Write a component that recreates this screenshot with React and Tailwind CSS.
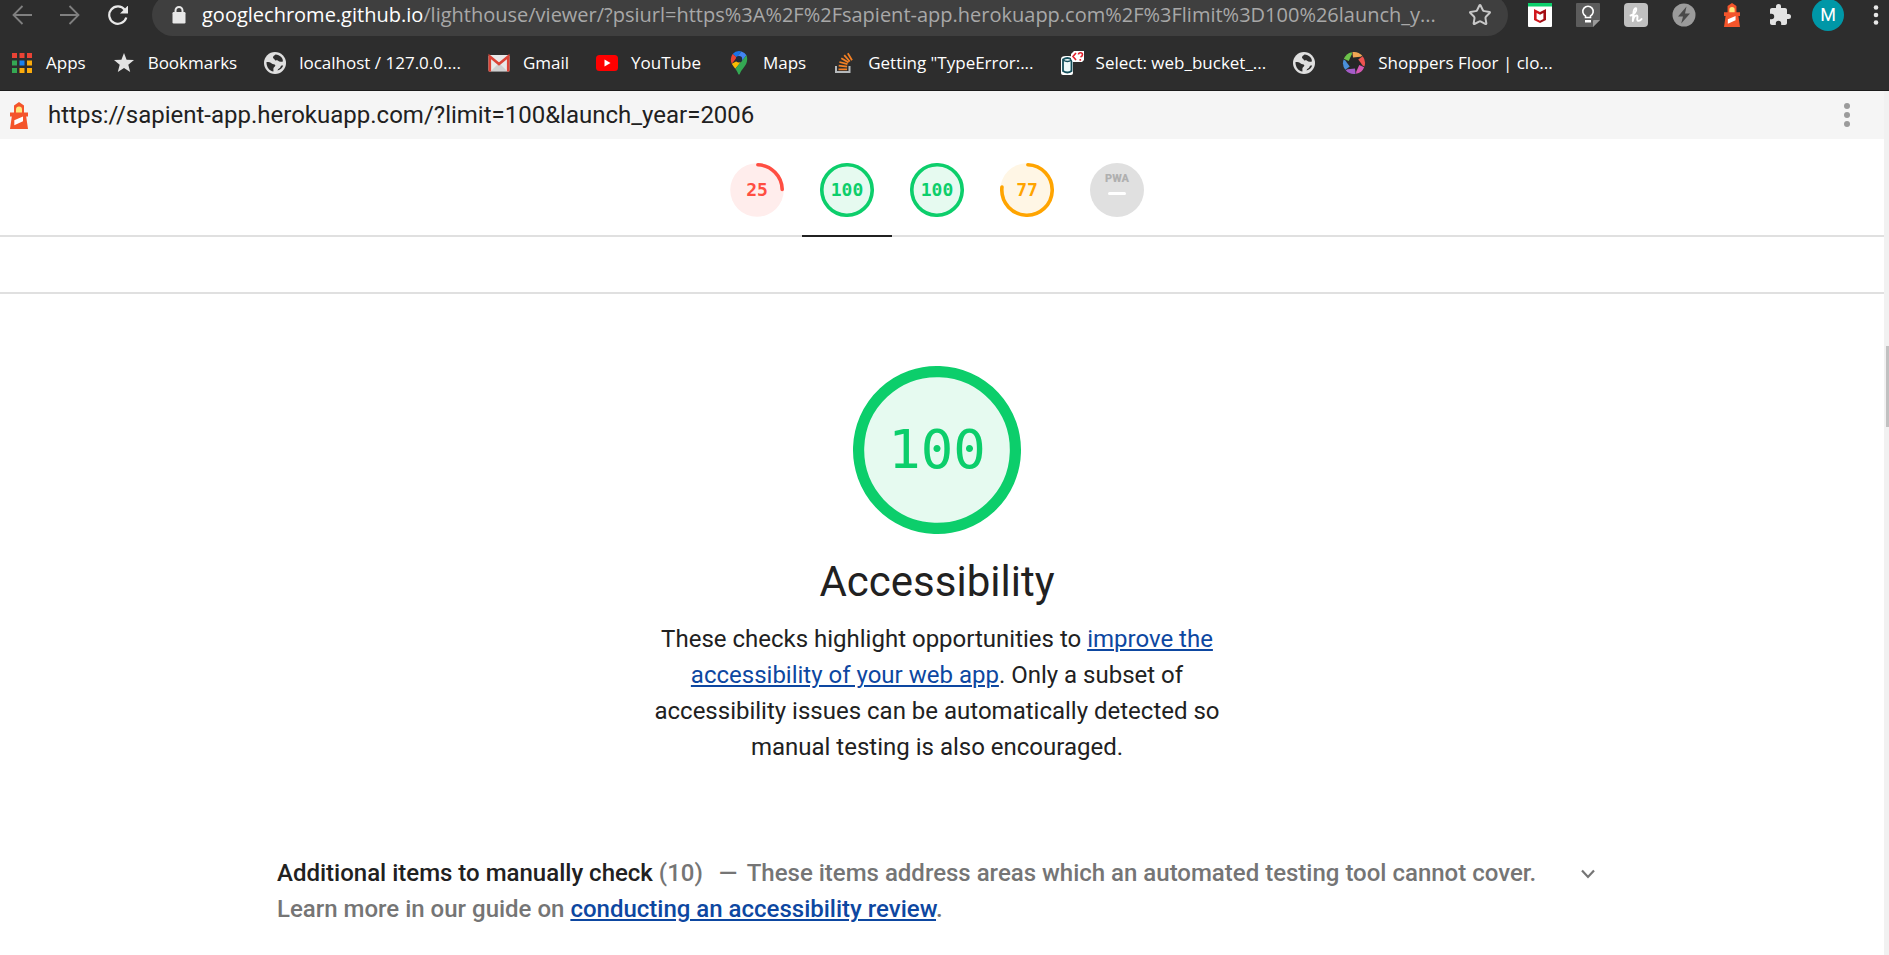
import React from "react";
import { Star } from "lucide-react";

function LighthouseIcon({ className }) {
  return (
    <svg viewBox="0 0 18 27" className={className} aria-hidden="true">
      <path d="M9 0 14 3.500V10.500H18V14.500H16.200L18 27H0L1.800 14.500H0V10.500H4V3.500Z" fill="#f4552b" />
      <path d="M6 10.500V7.500a3 3 0 0 1 6 0v3Z" fill="#ffe97d" />
      <path d="m4.300 18.200 8.700-3.700v4.800l-8.700 4Z" fill="#fff" />
    </svg>
  );
}

function GlobeIcon() {
  return (
    <svg viewBox="0 0 24 24" className="size-6" aria-hidden="true">
      <circle cx="12" cy="12" r="11" fill="#dfdfdf" />
      <path
        d="M12.500 3.500c-1 1-2.500 1.300-2.500 3 0 1.200 1.300 1 1.600 2 .4 1.600 2.600.4 3.500 1.300 1 1 2.600 1.200 4.800.7C20 6.500 17 4 12.500 3.500ZM3.500 11c2.500 0 4 .3 5.200 1.600 1 .9 3 .2 3.600 1.700.5 1.400-1.800 1.600-1.900 3.200-.1 1.300.2 2.500 0 3C6.500 20 3.300 16.200 3.500 11Zm11 8.500c.3-2 2.800-2 3.200-4 .2-1.200 1.300-1.200 2.500-1-.8 2.500-3 4.500-5.700 5Z"
        fill="#2d2d2d"
      />
    </svg>
  );
}

function AppsIcon() {
  const colors = ["#ea4335", "#ea4335", "#ea4335", "#34a853", "#1a82f0", "#fbab0c", "#34a853", "#fbab0c", "#fbab0c"];
  return (
    <svg viewBox="0 0 24 24" className="size-6" aria-hidden="true">
      {colors.map((c, i) => (
        <rect key={i} x={2 + (i % 3) * 7.500} y={2 + Math.floor(i / 3) * 7.500} width="5" height="5" fill={c} />
      ))}
    </svg>
  );
}

function SolidStarIcon() {
  return (
    <svg viewBox="0 0 24 24" className="size-6" aria-hidden="true">
      <path d="m12 2 2.600 6.700 7.400.4-5.700 4.600 1.900 7.300-6.200-4-6.200 4 1.900-7.300L2 9.100l7.400-.4Z" fill="#e3e3e3" />
    </svg>
  );
}

function GmailIcon() {
  return (
    <svg viewBox="0 0 24 24" className="size-6" aria-hidden="true">
      <rect x="1.500" y="4" width="21" height="16.500" rx="1.500" fill="#e9e9e9" />
      <path d="m4 20 8-8 8 8Z" fill="#d0d0d0" />
      <path d="M2.800 20.500V5.500L12 13l9.200-7.500v15" fill="none" stroke="#db4437" strokeWidth="2.600" />
    </svg>
  );
}

function YouTubeIcon() {
  return (
    <svg viewBox="0 0 24 24" className="size-6" aria-hidden="true">
      <rect x="1" y="4" width="22" height="16" rx="3.500" fill="#f00" />
      <path d="m9.500 8.500 6 3.500-6 3.500Z" fill="#fff" />
    </svg>
  );
}

function MapsIcon() {
  return (
    <svg viewBox="0 0 24 24" className="size-6" aria-hidden="true">
      <path d="M12 0a8.200 8.200 0 0 0-6.300 2.900L9.600 6.200 14.500.4A8.200 8.200 0 0 0 12 0Z" fill="#1a73e8" />
      <path d="M5.700 2.900A8.200 8.200 0 0 0 3.800 8.200c0 1.700.4 3.200 1 4.500l5-6.300Z" fill="#ea4335" />
      <path d="m14.500.4-5 6 5 4 5-6.100A8.200 8.200 0 0 0 14.500.4Z" fill="#4285f4" />
      <path d="M9.500 10.300 4.800 12.700c.9 1.800 2.200 3.300 3.500 5l6.200-7.400Z" fill="#fbbc04" />
      <path d="m19.500 4.300-5 6-6.200 7.400c1.200 1.500 2.300 3.200 2.800 5.100.3 1.100 1.500 1.100 1.800 0 1.200-4.600 7.300-8 7.300-14.600 0-1.400-.2-2.700-.7-3.900Z" fill="#34a853" />
      <circle cx="12" cy="8.200" r="3.200" fill="#202b3a" />
    </svg>
  );
}

function StackOverflowIcon() {
  return (
    <svg viewBox="0 0 24 24" className="size-6" fill="none" aria-hidden="true">
      <path d="M4 15v6h13.500v-6" stroke="#b5b9bc" strokeWidth="2" />
      <g stroke="#f48024" strokeWidth="1.800">
        <path d="M6.500 18.300h8.500M6.700 14.700l8.400.9M7.400 11l8.100 2.200M9.300 7.200l7.200 4.400M12.200 4.200l5.600 6.300M15.800 2.200l4.200 7" />
      </g>
    </svg>
  );
}

function BucketIcon() {
  return (
    <svg viewBox="0 0 24 24" className="size-6" aria-hidden="true">
      <path d="M1 8q0-3 5-3h3q4 0 4 3v14q0 2-2 2H3q-2 0-2-2Z" fill="#fff" />
      <path d="M3 8.500q4.500-3 8.500 0V20q-4 3-8.500 0Z" fill="#eefafa" stroke="#16505c" strokeWidth="1.800" />
      <path d="M3 9q4.500 3 8.500 0" fill="none" stroke="#16505c" strokeWidth="1.500" />
      <path d="M14 0h10v9l-2 2h-9l-2-3V3Z" fill="#fff" />
      <path d="m16 2-3 3.500L16 9M18.500 3.500q0-1.800 2-1.800t2 2q0 1.500-2 2.300M20.300 8v1.800" fill="none" stroke="#e3202b" strokeWidth="1.600" />
    </svg>
  );
}

function ApertureIcon() {
  const colors = ["#f2a654", "#ef5350", "#d659b4", "#a55cc9", "#4a90d9", "#6cc24a"];
  return (
    <svg viewBox="-12 -12 24 24" className="size-6" aria-hidden="true">
      <circle r="7" fill="#262626" />
      {colors.map((c, i) => (
        <path key={c} d="M-1.500-10.900A11 11 0 0 1 8.300-7.200L6.500-6.300-1-5.500Z" fill={c} transform={`rotate(${i * 60})`} />
      ))}
    </svg>
  );
}

const bookmarks = [
  { icon: <AppsIcon />, label: "Apps" },
  { icon: <SolidStarIcon />, label: "Bookmarks" },
  { icon: <GlobeIcon />, label: "localhost / 127.0.0...." },
  { icon: <GmailIcon />, label: "Gmail" },
  { icon: <YouTubeIcon />, label: "YouTube" },
  { icon: <MapsIcon />, label: "Maps" },
  { icon: <StackOverflowIcon />, label: 'Getting "TypeError:...' },
  { icon: <BucketIcon />, label: "Select: web_bucket_..." },
  { icon: <GlobeIcon />, label: "" },
  { icon: <ApertureIcon />, label: "Shoppers Floor | clo..." },
];

const extensions = [
  {
    name: "McAfee",
    icon: (
      <svg viewBox="0 0 24 24" className="size-6">
        <path d="M0 0h24v23a1 1 0 0 1-1 1H1a1 1 0 0 1-1-1Z" fill="#fff" />
        <path d="M0 0h24v3.500H0Z" fill="#0ccf6b" />
        <path d="m6 6 6 3v2.800L8.600 10v6l3.400 1.700V20l-6-3Z" fill="#d0161c" />
        <path d="m18 6-6 3v2.800l3.400-1.800v6L12 17.700V20l6-3Z" fill="#a30d14" />
      </svg>
    ),
  },
  {
    name: "Keep",
    icon: (
      <svg viewBox="0 0 24 24" className="size-6">
        <path d="M1 0h22a1 1 0 0 1 1 1v16l-7 7H1a1 1 0 0 1-1-1V1a1 1 0 0 1 1-1Z" fill="#5c5c5c" />
        <path d="M17 24v-6a1 1 0 0 1 1-1h6Z" fill="#9a9a9a" />
        <path d="M9.500 14.500V13a5.200 5.200 0 1 1 5 0v1.500Z" fill="none" stroke="#fff" strokeWidth="1.600" />
        <path d="M9 17h6v2.500H9Z" fill="#fff" />
      </svg>
    ),
  },
  {
    name: "Honey",
    icon: (
      <svg viewBox="0 0 24 24" className="size-6">
        <rect width="24" height="24" rx="4" fill="#c0c0c0" />
        <path
          d="M6.500 12.500c3-.5 6.200-4 5.800-6.500-.4-1.700-2.300-.6-2.700 2.500L8.800 18c.6-3 2-5.600 3.800-5.500 1.500.2.700 2.400.6 3.800 0 2.300 2.600 2 4.300-.2"
          fill="none"
          stroke="#fff"
          strokeWidth="1.900"
          strokeLinecap="round"
          strokeLinejoin="round"
        />
      </svg>
    ),
  },
  {
    name: "AMP",
    icon: (
      <svg viewBox="0 0 24 24" className="size-6">
        <circle cx="12" cy="12" r="11.500" fill="#9b9b9b" />
        <path d="M14.500 3.500 6 13.500h5l-1.800 7L18 10.500h-5Z" fill="#4a4a4a" />
      </svg>
    ),
  },
  { name: "Lighthouse", icon: <LighthouseIcon className="h-6 w-4" /> },
  {
    name: "Extensions",
    icon: (
      <svg viewBox="0 0 24 24" className="size-6">
        <path
          d="M20.500 11H19V7c0-1.100-.9-2-2-2h-4V3.500a2.500 2.500 0 0 0-5 0V5H4c-1.100 0-2 .9-2 2v3.800h1.500a2.700 2.700 0 0 1 0 5.400H2V20c0 1.100.9 2 2 2h3.800v-1.500a2.700 2.700 0 0 1 5.400 0V22H17c1.100 0 2-.9 2-2v-4h1.500a2.500 2.500 0 0 0 0-5Z"
          fill="#e3e3e3"
        />
      </svg>
    ),
  },
];

function BrowserChrome() {
  return (
    <header className="overflow-hidden border-b border-[#1c1c1c] bg-[#2d2d2d] font-['Open_Sans','Noto_Sans',sans-serif]">
      <div className="-mt-1.5 flex h-[42px] items-center">
        <div className="mr-6 flex gap-7 pl-3">
          <button type="button" aria-label="Back">
            <svg viewBox="0 0 20 20" className="size-5" fill="none" stroke="#808080" strokeWidth="1.800">
              <path d="M20 10H1.500M10.500 1 1.500 10l9 9" />
            </svg>
          </button>
          <button type="button" aria-label="Forward">
            <svg viewBox="0 0 20 20" className="size-5" fill="none" stroke="#808080" strokeWidth="1.800">
              <path d="M0 10h18.500M9.500 1l9 9-9 9" />
            </svg>
          </button>
          <button type="button" aria-label="Reload">
            <svg viewBox="0 0 20 20" className="size-5">
              <path d="M16.800 4.700A8.700 8.700 0 1 0 18.300 12.500" fill="none" stroke="#e8e8e8" strokeWidth="2.200" />
              <path d="M20.500 0v8.500H12Z" fill="#e8e8e8" />
            </svg>
          </button>
        </div>
        <div className="flex h-full min-w-0 flex-1 items-center rounded-full bg-[#3f3f3f] pr-4 pl-5">
          <svg viewBox="0 0 14 18" className="h-[18px] w-3.5 shrink-0" aria-hidden="true">
            <rect x="0.500" y="6" width="13" height="11.500" rx="1.200" fill="#e8e8e8" />
            <path d="M3.500 7V4.500a3.500 3.500 0 0 1 7 0V7" fill="none" stroke="#e8e8e8" strokeWidth="2" />
          </svg>
          <p className="ml-4 min-w-0 flex-1 overflow-hidden text-xl whitespace-nowrap text-[#a8a8a8]">
            <span className="text-white">googlechrome.github.io</span>
            /lighthouse/viewer/?psiurl=https%3A%2F%2Fsapient-app.herokuapp.com%2F%3Flimit%3D100%26launch_y...
          </p>
          <button type="button" aria-label="Bookmark this page">
            <Star className="size-6 text-[#c8c8c8]" strokeWidth={2} />
          </button>
        </div>
        <div className="ml-2 flex shrink-0 items-center">
          {extensions.map((e) => (
            <button key={e.name} type="button" aria-label={e.name} className="flex w-12 justify-center">
              {e.icon}
            </button>
          ))}
          <button type="button" aria-label="Profile" className="flex w-12 justify-center">
            <span className="flex size-8 items-center justify-center rounded-full bg-[#0097a7] font-[Roboto,sans-serif] text-lg text-white">
              M
            </span>
          </button>
          <button type="button" aria-label="Browser menu" className="pr-2.5 pl-[21px]">
            <svg viewBox="0 0 6 20" className="h-5 w-1.5" fill="#e8e8e8">
              <circle cx="3" cy="2.500" r="2.300" />
              <circle cx="3" cy="10" r="2.300" />
              <circle cx="3" cy="17.500" r="2.300" />
            </svg>
          </button>
        </div>
      </div>
      <nav aria-label="Bookmarks" className="flex h-[54px] items-center gap-[26px] pl-2.5">
        {bookmarks.map((b, i) => (
          <a key={i} href="#bookmark" aria-label={b.label || "Page"} className="flex items-center gap-3 text-[17px] whitespace-nowrap text-white">
            {b.icon}
            {b.label && <span>{b.label}</span>}
          </a>
        ))}
      </nav>
    </header>
  );
}

const tones = {
  red: { stroke: "#ff4e42", fill: "#ffedec", text: "text-[#ff4e42]" },
  green: { stroke: "#0cce6b", fill: "#e6faf0", text: "text-[#0cce6b]" },
  orange: { stroke: "#ffa400", fill: "#fff6e5", text: "text-[#ffa400]" },
};

function Gauge({ score, tone, large }) {
  const t = tones[tone];
  const length = 2 * Math.PI * 56;
  const arc = score === 100 ? length : (score / 100) * length - 4;
  return (
    <span className={`grid place-items-center ${large ? "size-[168px]" : "size-[54px]"}`}>
      <svg viewBox="0 0 120 120" className="col-start-1 row-start-1 size-full" aria-hidden="true">
        <circle cx="60" cy="60" r="59.500" fill={t.fill} />
        <circle
          cx="60"
          cy="60"
          r="56"
          fill="none"
          stroke={t.stroke}
          strokeWidth="8"
          strokeLinecap="round"
          strokeDasharray={`${arc} ${length}`}
          transform="rotate(-88 60 60)"
        />
      </svg>
      <span
        className={`col-start-1 row-start-1 font-['DejaVu_Sans_Mono',monospace] ${t.text} ${
          large ? "text-[54px] leading-none" : "text-lg leading-none font-bold"
        }`}
      >
        {score}
      </span>
    </span>
  );
}

const categories = [
  { name: "Performance", score: 25, tone: "red" },
  { name: "Accessibility", score: 100, tone: "green", active: true },
  { name: "Best Practices", score: 100, tone: "green" },
  { name: "SEO", score: 77, tone: "orange" },
];

function ScoreNav() {
  return (
    <nav aria-label="Scores" className="flex justify-center border-b-2 border-[#e0e0e0] pr-2.5">
      {categories.map((c) => (
        <a
          key={c.name}
          href="#category"
          aria-label={`${c.name} ${c.score}`}
          className={`-mb-0.5 flex w-[90px] justify-center border-b-2 pt-6 pb-[18px] ${
            c.active ? "border-[#212121]" : "border-transparent"
          }`}
        >
          <Gauge score={c.score} tone={c.tone} />
        </a>
      ))}
      <a href="#pwa" className="flex w-[90px] justify-center pt-6 pb-4">
        <span className="flex size-[54px] flex-col items-center rounded-full bg-[#e0e0e0] pt-2.5 text-[11px] leading-none font-black text-[#b0b0b0]">
          PWA
          <span className="mt-2 h-[3px] w-[18px] rounded-full bg-white" />
        </span>
      </a>
    </nav>
  );
}

const linkClass = "text-[#0d47a1] underline decoration-2 underline-offset-2";

export default function App() {
  return (
    <div className="flex min-h-screen flex-col bg-white">
      <BrowserChrome />
      <div className="flex flex-1">
        <div className="min-w-0 flex-1 font-[Roboto,sans-serif] text-2xl leading-9 text-[#212121]">
          <div className="flex h-12 items-center bg-[#f5f5f5] pl-2.5">
            <LighthouseIcon className="h-[27px] w-[18px]" />
            <p className="ml-5 flex-1">https://sapient-app.herokuapp.com/?limit=100&amp;launch_year=2006</p>
            <button type="button" aria-label="Report tools" className="pr-[34px]">
              <svg viewBox="0 0 6 24" className="h-6 w-1.5 overflow-visible" fill="#9b9b9b">
                <circle cx="3" cy="3" r="3" />
                <circle cx="3" cy="12" r="3" />
                <circle cx="3" cy="21" r="3" />
              </svg>
            </button>
          </div>
          <ScoreNav />
          <div className="h-[57px] border-b-2 border-[#e0e0e0]" />
          <main className="pr-2.5">
            <section className="mx-auto flex max-w-[600px] flex-col items-center pt-[72px] text-center">
              <Gauge score={100} tone="green" large />
              <h1 className="mt-[18px] text-[42px] leading-[60px]">Accessibility</h1>
              <p className="mt-[9px]">
                These checks highlight opportunities to{" "}
                <a href="#improve" className={linkClass}>
                  improve the accessibility of your web app
                </a>
                . Only a subset of accessibility issues can be automatically detected so manual testing is also encouraged.
              </p>
            </section>
            <details className="mx-auto mt-[90px] max-w-[1320px]">
              <summary className="flex cursor-pointer list-none justify-between font-medium text-[#757575]">
                <span className="max-w-[1280px]">
                  <span className="text-[#212121]">Additional items to manually check</span> (10)
                  <span className="mr-1 ml-4">—</span> These items address areas which an automated testing tool cannot
                  cover. Learn more in our guide on{" "}
                  <a href="#review" className={linkClass}>
                    conducting an accessibility review
                  </a>
                  .
                </span>
                <svg viewBox="0 0 18 36" className="h-9 w-[18px] shrink-0" fill="none" stroke="#757575" strokeWidth="2.200" aria-hidden="true">
                  <path d="m3 15.500 6 6.500 6-6.500" />
                </svg>
              </summary>
            </details>
          </main>
        </div>
        <div className="w-[5px] bg-[#f1f1f1] pt-[255px] pl-0.5" aria-hidden="true">
          <div className="h-[81px] bg-[#c1c1c1]" />
        </div>
      </div>
    </div>
  );
}
